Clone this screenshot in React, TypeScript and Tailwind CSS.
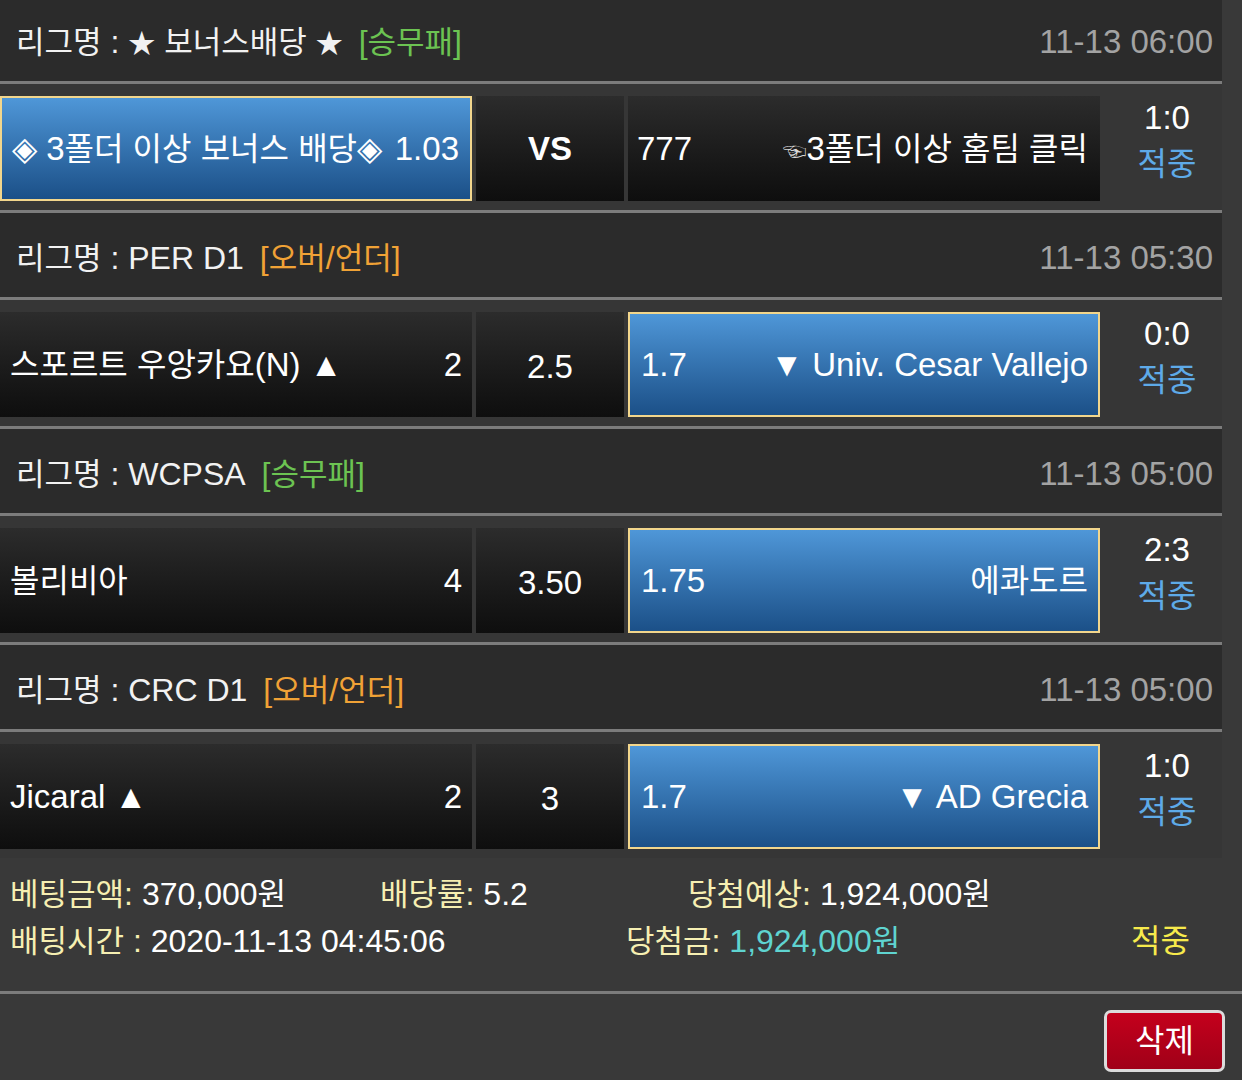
import React from "react";

interface Match {
  league: string;
  tag: string;
  tagColor: "green" | "orange";
  time: string;
  home: string;
  homeOdds: string;
  center: string;
  centerBold?: boolean;
  away: string;
  awayOdds: string;
  pick: "home" | "away";
  score: string;
}

const matches: Match[] = [
  {
    league: "★ 보너스배당 ★",
    tag: "[승무패]",
    tagColor: "green",
    time: "11-13 06:00",
    home: "◈ 3폴더 이상 보너스 배당◈",
    homeOdds: "1.03",
    center: "VS",
    centerBold: true,
    away: "3폴더 이상 홈팀 클릭",
    awayOdds: "777",
    pick: "home",
    score: "1:0",
  },
  {
    league: "PER D1",
    tag: "[오버/언더]",
    tagColor: "orange",
    time: "11-13 05:30",
    home: "스포르트 우앙카요(N) ▲",
    homeOdds: "2",
    center: "2.5",
    away: "▼ Univ. Cesar Vallejo",
    awayOdds: "1.7",
    pick: "away",
    score: "0:0",
  },
  {
    league: "WCPSA",
    tag: "[승무패]",
    tagColor: "green",
    time: "11-13 05:00",
    home: "볼리비아",
    homeOdds: "4",
    center: "3.50",
    away: "에콰도르",
    awayOdds: "1.75",
    pick: "away",
    score: "2:3",
  },
  {
    league: "CRC D1",
    tag: "[오버/언더]",
    tagColor: "orange",
    time: "11-13 05:00",
    home: "Jicaral ▲",
    homeOdds: "2",
    center: "3",
    away: "▼ AD Grecia",
    awayOdds: "1.7",
    pick: "away",
    score: "1:0",
  },
];

// korean glyphs render a bit smaller than latin ones in the original
const T: React.FC<{ s: string; small?: boolean }> = ({ s, small }) => (
  <>
    {s.split(/([\uAC00-\uD7A3]+|★)/).map((part, i) =>
      part === "★" ? (
        <span key={i} className="text-[27px]">
          {part}
        </span>
      ) : /[\uAC00-\uD7A3]/.test(part) ? (
        <span key={i} className={small ? "text-[31px]" : "text-[32px]"}>
          {part}
        </span>
      ) : (
        <React.Fragment key={i}>{part}</React.Fragment>
      )
    )}
  </>
);

const dark = "bg-gradient-to-b from-[#2c2c2c] to-[#0e0e0e]";
const blue =
  "bg-gradient-to-b from-[#4f97d8] to-[#1b5088] border-2 border-[#f2d68c]";

const MatchBlock: React.FC<{ m: Match; last: boolean }> = ({ m, last }) => {
  const homeSel = m.pick === "home";
  const awaySel = m.pick === "away";
  return (
    <>
      <div className="h-[84px] bg-[#2b2b2b] w-[1222px] flex items-center justify-between pt-[6px] pl-4 pr-[9px]">
        <div className="text-[#f2f2f2] whitespace-nowrap text-[32px]">
          <T s={`리그명 : ${m.league}`} small />
          <span
            className={
              m.tagColor === "green"
                ? "ml-4 text-[#6cc352]"
                : "ml-4 text-[#f0a236]"
            }
          >
            <T s={m.tag} small />
          </span>
        </div>
        <div className="text-[#a3a3a3]">{m.time}</div>
      </div>
      <div className="h-[3px] w-[1222px] bg-[#7c7c7c]" />
      <div className="flex pt-3 pb-[9px] bg-[#363636] w-[1222px]">
        <div
          className={`w-[472px] h-[105px] flex items-center justify-between ${
            homeSel ? blue + " pl-[10px] pr-[11px]" : dark + " pl-[10px] pr-[10px]"
          }`}
        >
          <span className="whitespace-nowrap">
            <T s={m.home} />
          </span>
          <span>{m.homeOdds}</span>
        </div>
        <div
          className={`ml-1 w-[148px] h-[105px] flex items-center justify-center ${dark}`}
        >
          <span className={m.centerBold ? "font-bold" : "pt-[4px]"}>
            {m.center}
          </span>
        </div>
        <div
          className={`ml-1 w-[472px] h-[105px] flex items-center justify-between ${
            awaySel ? blue + " pl-[11px] pr-[10px]" : dark + " pl-[9px] pr-[12px]"
          }`}
        >
          <span>{m.awayOdds}</span>
          <span className="whitespace-nowrap">
            {m.centerBold && <span className="text-[24px] text-[#d8d8d8]">☜</span>}
            <T s={m.away} />
          </span>
        </div>
        <div className="flex-1 h-[105px] flex flex-col items-center pl-3 leading-[46px] -mt-[1px]">
          <span>{m.score}</span>
          <span className="text-[#5eaae8] text-[32px]">적중</span>
        </div>
      </div>
      {!last && <div className="h-[3px] w-[1222px] bg-[#7c7c7c]" />}
    </>
  );
};

const Label: React.FC<{ s: string }> = ({ s }) => (
  <span className="text-[#f6efb2]">
    <T s={s} small />
  </span>
);

export default function App() {
  return (
    <div
      className="w-[1242px] h-[1080px] overflow-hidden bg-[#393939] text-white text-[33px]"
      style={{ fontFamily: '"Liberation Sans", "Noto Sans CJK KR", sans-serif' }}
    >
      <div className="-mt-[3px]">
        {matches.map((m, i) => (
          <MatchBlock key={i} m={m} last={i === matches.length - 1} />
        ))}
      </div>
      <div className="w-[1222px] h-[133px] pt-[13px] pl-[10px] leading-[46px] text-[32px]">
        <div className="flex">
          <div className="w-[370px]">
            <Label s="베팅금액:" /> <T s="370,000원" small />
          </div>
          <div className="w-[308px]">
            <Label s="배당률:" /> 5.2
          </div>
          <div>
            <Label s="당첨예상:" /> <T s="1,924,000원" small />
          </div>
        </div>
        <div className="flex">
          <div className="w-[616px]">
            <Label s="배팅시간 :" /> 2020-11-13 04:45:06
          </div>
          <div className="w-[505px]">
            <Label s="당첨금:" />{" "}
            <span className="text-[#5fd4d0]">
              <T s="1,924,000원" small />
            </span>
          </div>
          <div className="text-[#f7ea4c]">적중</div>
        </div>
      </div>
      <div className="h-[3px] w-[1242px] bg-[#7c7c7c]" />
      <div className="flex justify-end pt-4 pr-[17px]">
        <button className="w-[121px] h-[62px] rounded-[7px] border-[3px] border-[#dcdcdc] bg-gradient-to-b from-[#c4001c] to-[#a00018] text-white text-[32px] flex items-center justify-center">
          삭제
        </button>
      </div>
    </div>
  );
}
